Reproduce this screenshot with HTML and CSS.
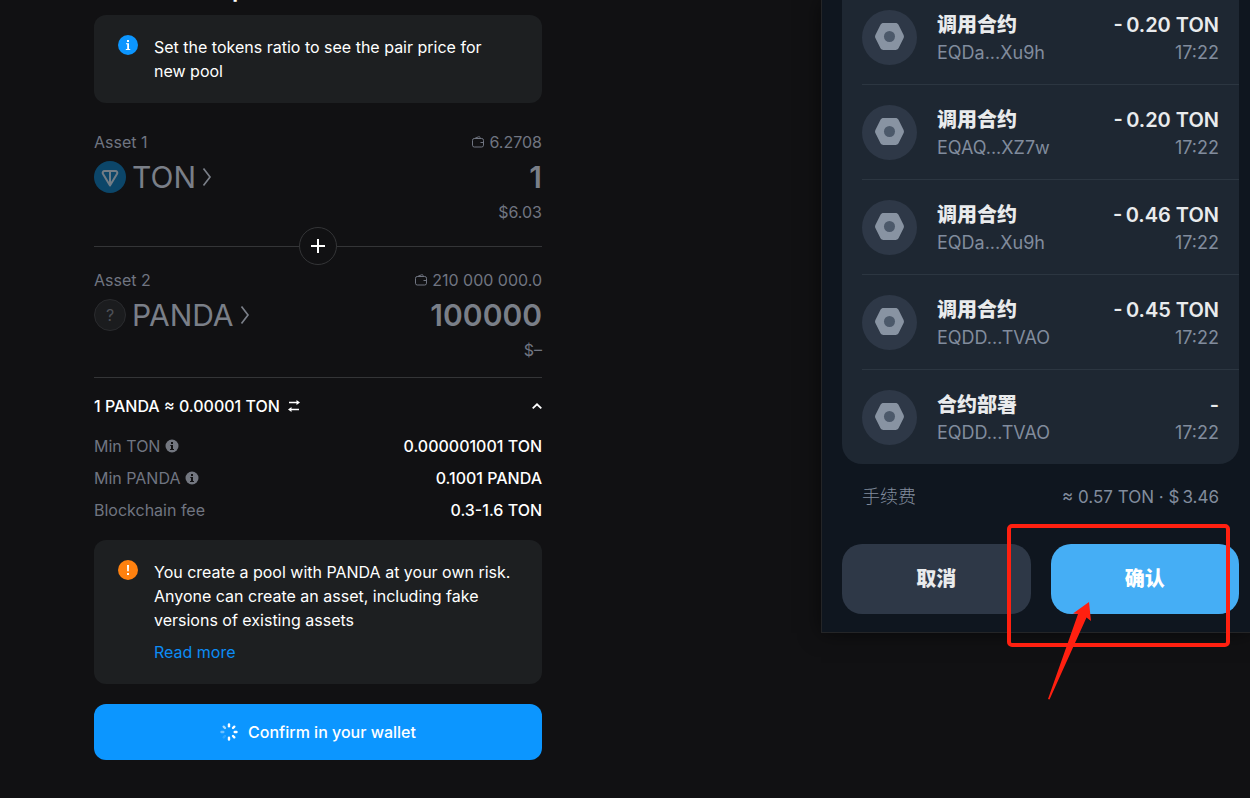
FILE: index.html
```html
<!DOCTYPE html>
<html lang="en">
<head>
<meta charset="utf-8">
<title>Create new pool</title>
<link rel="stylesheet" href="styles.css">
</head>
<body>
<svg class="defs" aria-hidden="true">
  <symbol id="nut" viewBox="0 0 55 55">
    <path fill="#8893a2" d="M21.500 13h12c1.300 0 2.300.6 3 1.700l5 10c.6 1.200.6 2.400 0 3.600l-5 10c-.7 1.100-1.700 1.700-3 1.700h-12c-1.300 0-2.300-.6-3-1.700l-5-10c-.6-1.200-.6-2.400 0-3.600l5-10c.7-1.100 1.700-1.700 3-1.700z"/>
    <circle cx="27.500" cy="26.500" r="5.500" fill="#4c596a"/>
  </symbol>
  <symbol id="purse" viewBox="0 0 12 12">
    <g fill="none" stroke="currentColor"><rect x=".5" y="2.500" width="11" height="8.500" rx="1.800"/><path d="M2.500 2.500 6.500.8q1-.4 1.500.5L8.600 2.500M8.500 6.500h3"/></g>
  </symbol>
  <symbol id="info" viewBox="0 0 14 14">
    <circle cx="7" cy="7" r="6.500" fill="#737780"/>
    <path d="M6 3h2v2H6zM5.300 6H8v4h1v1H5v-1h1V7h-.7z" fill="#111113"/>
  </symbol>
  <symbol id="next" viewBox="0 0 10 20">
    <path d="M1.500 1.500 8 10l-6.500 8.500" fill="none" stroke="currentColor" stroke-width="1.700"/>
  </symbol>
</svg>
<div class="page">
  <main class="pool">
    <h1 class="pool-title">Create new pool</h1>
    <section class="notice">
      <svg class="notice-icon" viewBox="0 0 20 20"><circle cx="10" cy="10" r="10" fill="#0c96ff"/><path d="M9 5h2v2H9zM8 8.300h3V14h1.200v1H7.800v-1h1.400V9.300H8z" fill="#fff"/></svg>
      <p>Set the tokens ratio to see the pair price for new pool</p>
    </section>

    <section class="asset">
      <div class="line"><label for="amount1">Asset 1</label><span class="balance"><svg><use href="#purse"/></svg>6.2708</span></div>
      <div class="asset-row">
        <button class="token" type="button">
          <svg class="coin" viewBox="0 0 32 32"><circle cx="16" cy="16" r="16" fill="#0c4669"/><path d="M10.500 10h11c1.500 0 2.300 1.500 1.600 2.700L16 24.500 8.900 12.700C8.200 11.500 9 10 10.500 10zM16 10v14" fill="none" stroke="#737d86" stroke-width="2" stroke-linejoin="round"/></svg>
          TON<svg class="next"><use href="#next"/></svg>
        </button>
        <input class="amount" id="amount1" value="1">
      </div>
      <div class="usd">$6.03</div>
    </section>
    <div class="joint"><button class="plus" type="button" aria-label="Add"><svg viewBox="0 0 14 14"><path d="M7 0v14M0 7h14" stroke="#fff" stroke-width="2"/></svg></button></div>
    <section class="asset">
      <div class="line"><label for="amount2">Asset 2</label><span class="balance"><svg><use href="#purse"/></svg>210 000 000.0</span></div>
      <div class="asset-row">
        <button class="token" type="button"><span class="coin unknown">?</span>PANDA<svg class="next"><use href="#next"/></svg></button>
        <input class="amount" id="amount2" value="100000">
      </div>
      <div class="usd">$–</div>
    </section>

    <section class="details">
      <button class="rate" type="button">
        <span>1 PANDA ≈ 0.00001 TON</span>
        <svg class="swap" viewBox="0 0 12 12"><path d="M1 2.500h9M2 9.500h9" stroke="#fff" stroke-width="1.500"/><path d="M8.500 0v5L12 2.500zM3.500 7v5L0 9.500z" fill="#fff"/></svg>
        <svg class="up" viewBox="0 0 10 6"><path d="m.7 5.300 4.300-4 4.300 4" fill="none" stroke="#fff" stroke-width="1.800"/></svg>
      </button>
      <dl class="facts">
        <div><dt>Min TON <svg><use href="#info"/></svg></dt><dd>0.000001001 TON</dd></div>
        <div><dt>Min PANDA <svg><use href="#info"/></svg></dt><dd>0.1001 PANDA</dd></div>
        <div><dt>Blockchain fee</dt><dd>0.3-1.6 TON</dd></div>
      </dl>
    </section>

    <section class="notice">
      <svg class="notice-icon" viewBox="0 0 20 20"><circle cx="10" cy="10" r="10" fill="#ff810f"/><path d="M9 5h2l-.2 6.300H9.200zM9 13h2v2H9z" fill="#fff"/></svg>
      <div><p>You create a pool with PANDA at your own risk. Anyone can create an asset, including fake versions of existing assets</p>
      <a class="more" href="#">Read more</a></div>
    </section>
    <button class="submit" type="button">
      <svg viewBox="0 0 18 18" stroke="#fff" stroke-width="2.400" stroke-linecap="round"><path d="M9 1.500v1.800"/><path d="m14.300 3.700-1.300 1.300"/><path d="M16.500 9h-1.800"/><path d="M14.300 14.300 13 13"/><path d="M9 16.500v-1.800"/><path opacity=".15" d="M3.700 14.300 5 13"/><path opacity=".4" d="M1.500 9h1.800"/><path opacity=".65" d="M3.700 3.700 5 5"/></svg>
      Confirm in your wallet
    </button>
  </main>

  <aside class="wallet" lang="zh-CN">
    <ul class="actions">
      <li><svg class="badge"><use href="#nut"/></svg><div class="info"><p class="main"><span>调用合约</span><span>-&thinsp;0.20 TON</span></p><p class="sub"><span>EQDa...Xu9h</span><span>17:22</span></p></div></li>
      <li><svg class="badge"><use href="#nut"/></svg><div class="info"><p class="main"><span>调用合约</span><span>-&thinsp;0.20 TON</span></p><p class="sub"><span>EQAQ...XZ7w</span><span>17:22</span></p></div></li>
      <li><svg class="badge"><use href="#nut"/></svg><div class="info"><p class="main"><span>调用合约</span><span>-&thinsp;0.46 TON</span></p><p class="sub"><span>EQDa...Xu9h</span><span>17:22</span></p></div></li>
      <li><svg class="badge"><use href="#nut"/></svg><div class="info"><p class="main"><span>调用合约</span><span>-&thinsp;0.45 TON</span></p><p class="sub"><span>EQDD...TVAO</span><span>17:22</span></p></div></li>
      <li><svg class="badge"><use href="#nut"/></svg><div class="info"><p class="main"><span>合约部署</span><span>-</span></p><p class="sub"><span>EQDD...TVAO</span><span>17:22</span></p></div></li>
    </ul>
    <p class="fee"><span>手续费</span><span>≈ 0.57 TON · $&thinsp;3.46</span></p>
    <div class="choices">
      <button class="cancel" type="button">取消</button>
      <div class="confirm-wrap">
        <button class="confirm" type="button">确认</button>
        <span class="mark"></span>
        <svg class="arrow" viewBox="0 0 44 100"><path fill="#ff2010" d="M42 1 44 20 39.500 16.500 2.500 98.500 1 98 31 13 26 12.500z"/></svg>
      </div>
    </div>
  </aside>
</div>
</body>
</html>
```
FILE: styles.css
```css
* { box-sizing: border-box; }
body, h1, p, ul, dl, dd { margin: 0; padding: 0; }
body {
  background: #111113;
  color: #fff;
  font: 16px/24px Inter, "Noto Sans CJK SC", sans-serif;
}
button, input { font: inherit; color: inherit; border: 0; background: none; padding: 0; }
button { cursor: pointer; }
svg { flex: none; }
.defs { position: absolute; width: 0; height: 0; }
.page {
  display: grid;
  grid-template-columns: minmax(0, 1fr) 429px;
  align-items: start;
  min-height: 100vh;
  overflow: hidden;
}

/* Pool form */
.pool { width: 100%; max-width: 542px; padding-left: 94px; }
.pool-title { margin: -23px 0 14px; font-size: 24px; line-height: 24px; font-weight: 600; }
.notice { display: flex; gap: 16px; padding: 20px 24px; border-radius: 12px; background: #1d1f21; }
.notice p { max-width: 360px; }
.notice-icon { width: 20px; height: 20px; }
.more { display: block; margin-top: 8px; color: #0c8cf5; text-decoration: none; }
.asset { color: #707581; }
.notice + .asset { margin-top: 27px; }
.line { display: flex; justify-content: space-between; }
.balance { display: flex; align-items: center; gap: 5px; }
.balance svg { width: 12px; height: 12px; }
.asset-row { display: flex; justify-content: space-between; height: 46px; align-items: center; color: #7a7f88; }
.token { display: flex; align-items: center; gap: 6px; font-size: 30px; line-height: 32px; }
.coin { width: 32px; height: 32px; }
.unknown { border: 1px solid #2a2b2e; border-radius: 50%; background: #1b1c1e; color: #4e5157; font-size: 16px; line-height: 30px; text-align: center; }
.next { width: 10px; height: 20px; }
.amount { width: 200px; min-width: 0; text-align: right; font-size: 30px; line-height: 32px; font-weight: 600; outline: 0; }
.usd { text-align: right; }
.joint { display: flex; align-items: center; height: 38px; margin: 3px 0; }
.joint::before, .joint::after { content: ""; flex: 1; height: 1px; background: #343537; }
.plus { display: grid; place-items: center; width: 38px; height: 38px; border: 1px solid #343537; border-radius: 50%; }
.plus svg { width: 14px; height: 14px; }
.details { margin: 15px 0 18px; padding-top: 16px; border-top: 1px solid #343537; }
.rate { display: flex; align-items: center; width: 100%; gap: 8px; font-weight: 500; }
.swap { width: 12px; height: 12px; }
.up { width: 10px; height: 6px; margin-left: auto; }
.facts { display: grid; gap: 8px; margin-top: 16px; }
.facts div { display: flex; justify-content: space-between; }
.facts dt { display: flex; align-items: center; gap: 5px; color: #707581; }
.facts dt svg { width: 14px; height: 14px; }
.facts dd { font-weight: 500; }
.submit { display: flex; align-items: center; justify-content: center; gap: 10px; width: 100%; height: 56px; margin-top: 20px; border-radius: 12px; background: #0c96ff; font-weight: 500; }
.submit svg { width: 18px; height: 18px; }

/* Wallet window */
.wallet {
  padding: 0 11px 18px 20px;
  border: solid #242527;
  border-width: 0 0 1px 1px;
  background: #0f161f;
  box-shadow: 0 0 20px #0008;
  font-size: 18px;
  line-height: 28px;
}
.actions { margin-top: -10px; list-style: none; border-radius: 0 0 20px 20px; background: #1e2732; }
.actions li { display: flex; gap: 20px; margin-left: 20px; padding: 20px 20px 19px 0; border-bottom: 1px solid #2c3641; }
.actions li:last-child { border: 0; }
.badge { width: 55px; height: 55px; border-radius: 50%; background: #2e3847; }
.info { flex: 1; height: 55px; padding-top: 1px; }
.main, .sub, .fee { display: flex; justify-content: space-between; }
.main { color: #e9ebed; font-size: 20px; font-weight: 600; }
.main span:first-child { font-weight: 900; }
.sub, .fee { color: #818c9d; }
.fee { padding: 19px 20px 0; }
.fee span:first-child { font-weight: 300; }
.fee span:last-child { font-size: 17px; }
.choices { display: grid; grid-template-columns: 1fr 1fr; gap: 20px; margin-top: 33px; }
.confirm-wrap { position: relative; }
.cancel, .confirm { width: 100%; height: 70px; border-radius: 20px; font-size: 20px; font-weight: 900; }
.cancel { background: #2e3847; color: #e9ebed; }
.confirm { background: #45aef5; }

/* Drawn highlight over the confirm button */
.mark { position: absolute; left: -44px; top: -20px; width: 223px; height: 123px; border: 4px solid #ff2010; border-radius: 5px; pointer-events: none; }
.arrow { position: absolute; left: -4px; top: 57px; width: 44px; height: 100px; pointer-events: none; }
```
